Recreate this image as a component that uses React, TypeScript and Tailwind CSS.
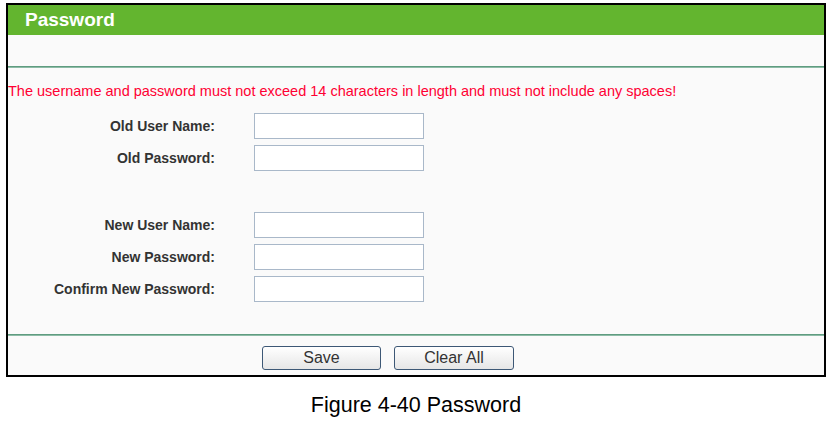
const rows1 = ['Old User Name:', 'Old Password:'];
const rows2 = ['New User Name:', 'New Password:', 'Confirm New Password:'];

function Row({ label }: { label: string }) {
  return (
    <div className="flex items-center h-[26px]">
      <div className="w-[207px] text-right text-[14px] font-bold text-[#333]">{label}</div>
      <div className="ml-[39px] w-[170px] h-[26px] border border-[#a9b8c9] bg-white" />
    </div>
  );
}

export default function App() {
  return (
    <div className="w-[832px] h-[426px] bg-white pt-[3px] pl-[6px] font-['Liberation_Sans',Arial,sans-serif]">
      <div className="w-[820px] h-[374px] border-2 border-black bg-[#fafafa] flex flex-col">
        {/* header */}
        <div className="h-[30px] bg-[#63b52f] flex items-center pl-[17px] text-white text-[19px] font-bold">Password</div>
        <div className="h-[31px]" />
        <div className="h-[2px] bg-[#5f9c80] border-b border-[#8dbba6]" />

        <div className="mt-[15px] h-[16px] leading-[16px] text-[14.5px] text-[#ff0033]">
          The username and password must not exceed 14 characters in length and must not include any spaces!
        </div>

        <div className="mt-[14px] flex flex-col gap-[6px]">
          {rows1.map((r) => <Row key={r} label={r} />)}
        </div>
        <div className="mt-[41px] flex flex-col gap-[6px]">
          {rows2.map((r) => <Row key={r} label={r} />)}
        </div>

        <div className="mt-[32px] h-[2px] bg-[#5f9c80] border-b border-[#8dbba6]" />

        <div className="mt-[10px] flex gap-[13px] pl-[254px]">
          <button className="w-[119px] h-[24px] rounded-[3px] border border-[#3d5876] bg-gradient-to-b from-white to-[#e6e6e6] text-[16px] text-[#333] leading-none">Save</button>
          <button className="w-[120px] h-[24px] rounded-[3px] border border-[#3d5876] bg-gradient-to-b from-white to-[#e6e6e6] text-[16px] text-[#333] leading-none">Clear All</button>
        </div>
      </div>
      <div className="w-[820px] text-center mt-[16px] text-[21.5px] leading-[24px] text-black">Figure 4-40 Password</div>
    </div>
  );
}
